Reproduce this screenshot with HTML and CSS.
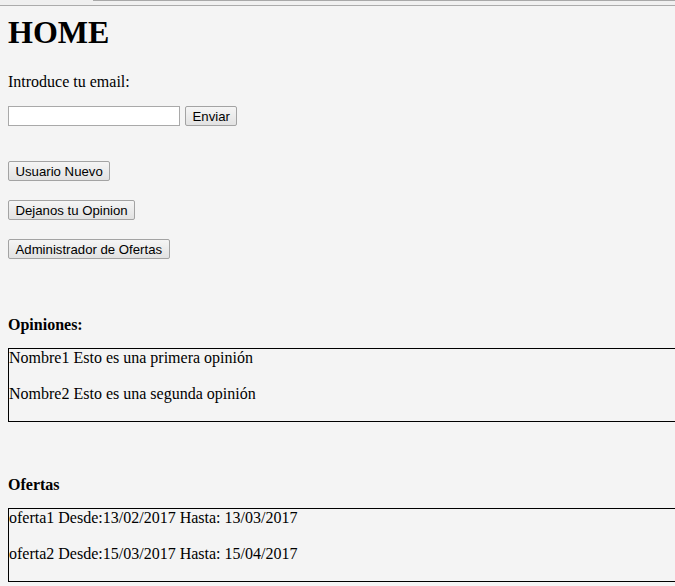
FILE: index.html
```html
<!DOCTYPE html>
<html lang="es">
<head>
<meta charset="utf-8">
<title>HOME</title>
<link rel="stylesheet" href="styles.css">
</head>
<body>
<div class="chrome"><div class="chrome-left"></div><div class="chrome-tab"></div></div>
<main class="page">
  <h1 class="title">HOME</h1>
  <p class="label">Introduce tu email:</p>
  <form class="email-row">
    <input class="field" type="text">
    <button class="btn" type="button">Enviar</button>
  </form>
  <div class="actions">
    <button class="btn" type="button">Usuario Nuevo</button>
    <button class="btn" type="button">Dejanos tu Opinion</button>
    <button class="btn" type="button">Administrador de Ofertas</button>
  </div>
  <h4 class="section-title first">Opiniones:</h4>
  <div class="list">
    <p class="item">Nombre1 Esto es una primera opinión</p>
    <p class="item">Nombre2 Esto es una segunda opinión</p>
  </div>
  <h4 class="section-title">Ofertas</h4>
  <div class="list">
    <p class="item">oferta1 Desde:13/02/2017 Hasta: 13/03/2017</p>
    <p class="item">oferta2 Desde:15/03/2017 Hasta: 15/04/2017</p>
  </div>
</main>
</body>
</html>
```
FILE: styles.css
```css
html, body {
  margin: 0;
  padding: 0;
  background: #f4f4f4;
  overflow: hidden;
}
body {
  font-family: "Liberation Serif", "Times New Roman", serif;
  font-size: 16px;
  line-height: 18px;
  color: #000;
}
.chrome {
  display: flex;
  height: 5px;
  border-bottom: 1px solid #ababab;
}
.chrome-left {
  width: 93px;
  background: #efefef;
}
.chrome-tab {
  flex: 1;
  border-top: 1px solid #a8a8a8;
  background: #f0f0f0;
}
.page {
  padding: 8px 8px 0;
}
.title {
  margin: 0;
  font-size: 32px;
  line-height: 37px;
  font-weight: bold;
}
.label {
  margin: 22px 0 0;
}
.email-row {
  display: flex;
  gap: 5px;
  margin: 15px 0 0;
}
.field {
  box-sizing: border-box;
  width: 172px;
  height: 20px;
  margin: 0;
  padding: 1px 2px;
  border: 1px solid #a9a9a9;
  background: #fff;
}
.btn {
  box-sizing: border-box;
  height: 20px;
  margin: 0;
  padding: 0 6.5px;
  font-family: "Liberation Sans", Arial, sans-serif;
  font-size: 13.2px;
  line-height: 17px;
  color: #000;
  background: linear-gradient(#f5f5f5, #e2e2e2);
  border: 1px solid #a3a3a3;
  border-radius: 2px;
}
.actions {
  display: flex;
  flex-direction: column;
  align-items: flex-start;
  gap: 19px;
  margin-top: 35px;
}
.section-title {
  margin: 57px 0 0;
  font-size: 16px;
  line-height: 18px;
  font-weight: bold;
}
.section-title + .list {
  margin-top: 14px;
}
.list + .section-title {
  margin-top: 54px;
}
.list {
  width: 720px;
  border: 1px solid #000;
}
.item {
  margin: 0 0 18px;
}
```
